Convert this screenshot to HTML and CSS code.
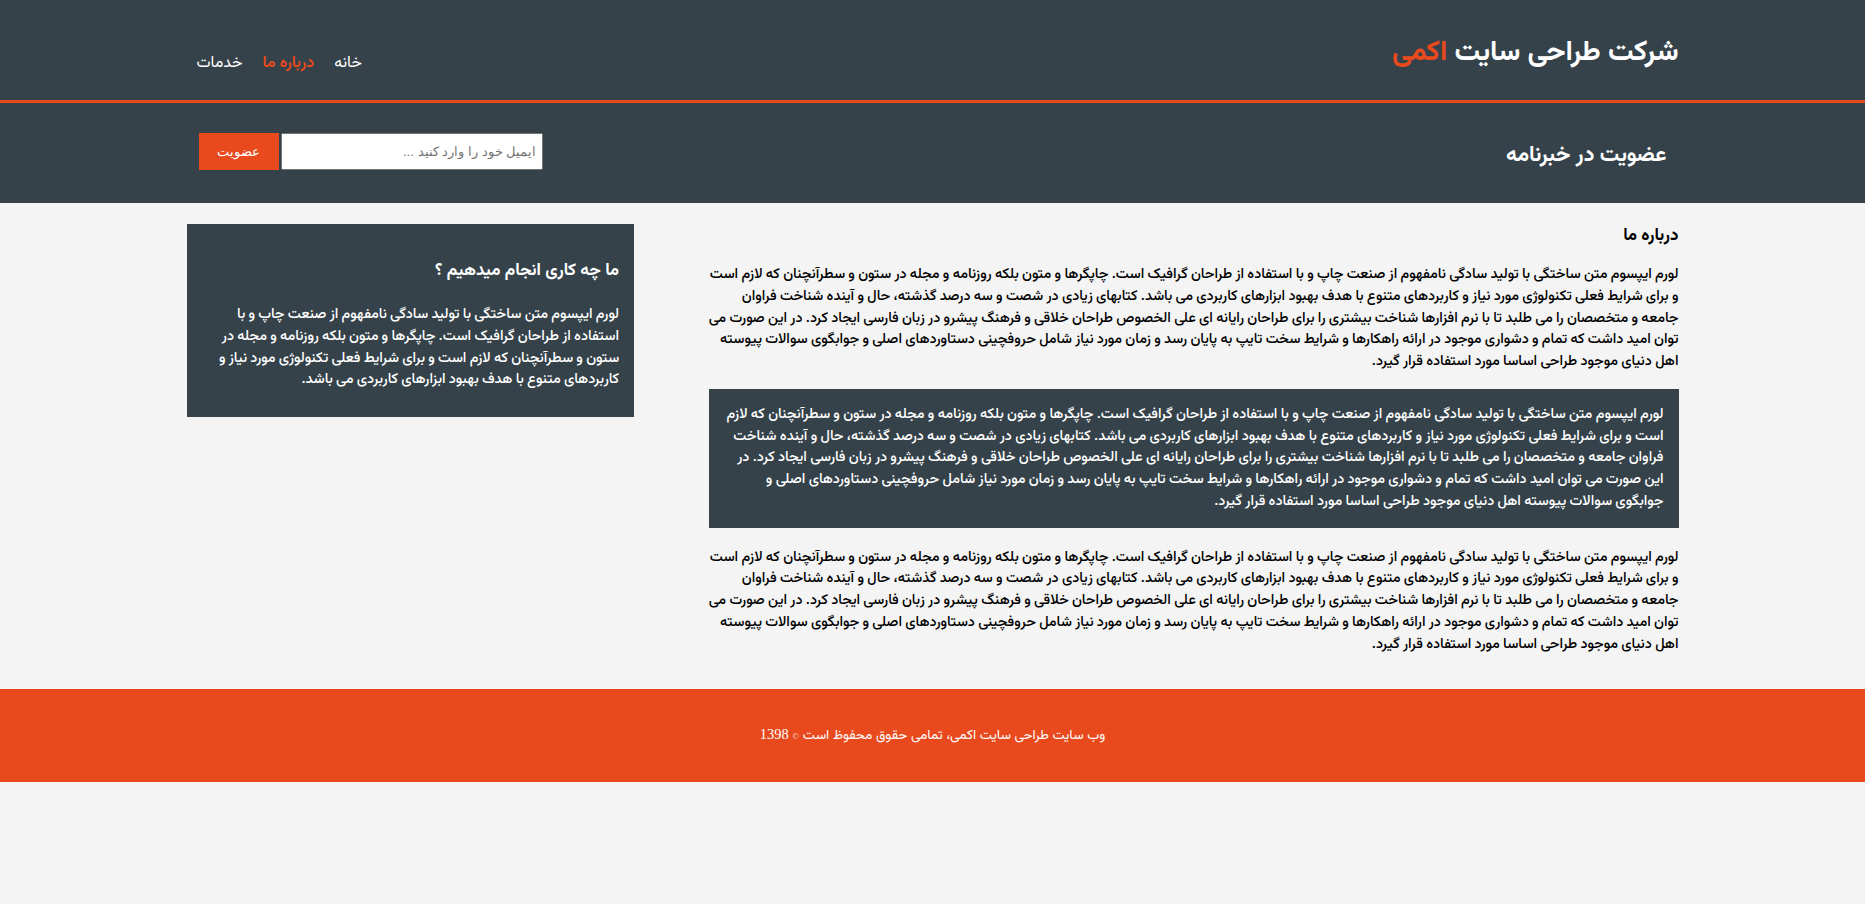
FILE: index.html
```html
<!DOCTYPE html>
<html lang="fa" dir="rtl">
<head>
<meta charset="utf-8">
<title>شرکت طراحی سایت اکمی | درباره ما</title>
<link rel="stylesheet" href="styles.css">
</head>
<body>
<header class="site-header">
  <div class="container header-inner">
    <div class="branding">
      <h1 class="brand">شرکت طراحی سایت <span class="highlight">اکمی</span></h1>
    </div>
    <nav class="main-nav">
      <ul class="nav-list">
        <li class="nav-item"><a class="nav-link" href="#">خانه</a></li>
        <li class="nav-item"><a class="nav-link current" href="#">درباره ما</a></li>
        <li class="nav-item"><a class="nav-link" href="#">خدمات</a></li>
      </ul>
    </nav>
  </div>
</header>

<section class="newsletter">
  <div class="container newsletter-inner">
    <h1 class="newsletter-title">عضویت در خبرنامه</h1>
    <form class="newsletter-form">
      <input class="email-input" type="email" placeholder="ایمیل خود را وارد کنید ...">
      <button class="button-1" type="submit">عضویت</button>
    </form>
  </div>
</section>

<section class="main">
  <div class="container main-inner">
    <article class="main-col">
      <h3 class="page-title">درباره ما</h3>
      <p class="text">لورم ایپسوم متن ساختگی با تولید سادگی نامفهوم از صنعت چاپ و با استفاده از طراحان گرافیک است. چاپگرها و متون بلکه روزنامه و مجله در ستون و سطرآنچنان که لازم است و برای شرایط فعلی تکنولوژی مورد نیاز و کاربردهای متنوع با هدف بهبود ابزارهای کاربردی می باشد. کتابهای زیادی در شصت و سه درصد گذشته، حال و آینده شناخت فراوان جامعه و متخصصان را می طلبد تا با نرم افزارها شناخت بیشتری را برای طراحان رایانه ای علی الخصوص طراحان خلاقی و فرهنگ پیشرو در زبان فارسی ایجاد کرد. در این صورت می توان امید داشت که تمام و دشواری موجود در ارائه راهکارها و شرایط سخت تایپ به پایان رسد و زمان مورد نیاز شامل حروفچینی دستاوردهای اصلی و جوابگوی سوالات پیوسته اهل دنیای موجود طراحی اساسا مورد استفاده قرار گیرد.</p>
      <p class="text dark">لورم ایپسوم متن ساختگی با تولید سادگی نامفهوم از صنعت چاپ و با استفاده از طراحان گرافیک است. چاپگرها و متون بلکه روزنامه و مجله در ستون و سطرآنچنان که لازم است و برای شرایط فعلی تکنولوژی مورد نیاز و کاربردهای متنوع با هدف بهبود ابزارهای کاربردی می باشد. کتابهای زیادی در شصت و سه درصد گذشته، حال و آینده شناخت فراوان جامعه و متخصصان را می طلبد تا با نرم افزارها شناخت بیشتری را برای طراحان رایانه ای علی الخصوص طراحان خلاقی و فرهنگ پیشرو در زبان فارسی ایجاد کرد. در این صورت می توان امید داشت که تمام و دشواری موجود در ارائه راهکارها و شرایط سخت تایپ به پایان رسد و زمان مورد نیاز شامل حروفچینی دستاوردهای اصلی و جوابگوی سوالات پیوسته اهل دنیای موجود طراحی اساسا مورد استفاده قرار گیرد.</p>
      <p class="text">لورم ایپسوم متن ساختگی با تولید سادگی نامفهوم از صنعت چاپ و با استفاده از طراحان گرافیک است. چاپگرها و متون بلکه روزنامه و مجله در ستون و سطرآنچنان که لازم است و برای شرایط فعلی تکنولوژی مورد نیاز و کاربردهای متنوع با هدف بهبود ابزارهای کاربردی می باشد. کتابهای زیادی در شصت و سه درصد گذشته، حال و آینده شناخت فراوان جامعه و متخصصان را می طلبد تا با نرم افزارها شناخت بیشتری را برای طراحان رایانه ای علی الخصوص طراحان خلاقی و فرهنگ پیشرو در زبان فارسی ایجاد کرد. در این صورت می توان امید داشت که تمام و دشواری موجود در ارائه راهکارها و شرایط سخت تایپ به پایان رسد و زمان مورد نیاز شامل حروفچینی دستاوردهای اصلی و جوابگوی سوالات پیوسته اهل دنیای موجود طراحی اساسا مورد استفاده قرار گیرد.</p>
    </article>
    <aside class="sidebar">
      <div class="dark sidebar-box">
        <h3 class="sidebar-title">ما چه کاری انجام میدهیم ؟</h3>
        <p class="sidebar-text">لورم ایپسوم متن ساختگی با تولید سادگی نامفهوم از صنعت چاپ و با استفاده از طراحان گرافیک است. چاپگرها و متون بلکه روزنامه و مجله در ستون و سطرآنچنان که لازم است و برای شرایط فعلی تکنولوژی مورد نیاز و کاربردهای متنوع با هدف بهبود ابزارهای کاربردی می باشد.</p>
      </div>
    </aside>
  </div>
</section>

<footer class="site-footer">
  <p class="footer-text">وب سایت طراحی سایت اکمی، تمامی حقوق محفوظ است <span class="copy">&copy;</span> <span class="year">1398</span></p>
</footer>
</body>
</html>
```

FILE: styles.css
```css
html, body {
  margin: 0;
  padding: 0;
}

body {
  background-color: #f4f4f4;
  color: #000;
  font-family: "Vazirmatn", "Noto Sans Arabic", "DejaVu Sans", sans-serif;
  font-size: 14.4px;
  font-weight: 500;
  line-height: 21.75px;
}

.container {
  width: 80%;
  margin: 0 auto;
}

/* Header */
.site-header {
  background: #35424a;
  color: #fff;
  height: 70px;
  padding-top: 30px;
  border-bottom: 3px solid #e8491d;
}

.header-inner {
  display: flex;
  justify-content: space-between;
  align-items: flex-start;
}

.brand {
  margin: 1px 0 0;
  font-size: 28.3px;
  line-height: 45px;
  font-weight: bold;
}

.highlight {
  color: #e8491d;
}

.main-nav {
  padding-top: 22px;
}

.nav-list {
  list-style: none;
  margin: 0;
  padding: 0;
  display: flex;
}

.nav-item {
  padding: 0 10px;
}

.nav-link {
  color: #fff;
  text-decoration: none;
  font-size: 16px;
  font-weight: 400;
  line-height: 24px;
}

.nav-link.current {
  color: #e8491d;
  font-weight: 600;
}

/* Newsletter */
.newsletter {
  background: #35424a;
  color: #fff;
  padding: 15px;
}

.newsletter-inner {
  display: flex;
  justify-content: space-between;
  align-items: flex-start;
}

.newsletter-title {
  margin: 19.5px 0 14px;
  font-size: 21.5px;
  line-height: 36px;
  font-weight: bold;
}

.newsletter-form {
  display: flex;
  gap: 2px;
  margin-top: 15px;
}

.email-input {
  width: 250px;
  height: 25px;
  padding: 4px;
  margin: 0;
}

.button-1 {
  height: 37px;
  margin: 0;
  background: #e8491d;
  border: 0;
  padding: 0 18.5px;
  color: #fff;
}

/* Main */
.main-inner {
  display: flex;
  justify-content: space-between;
  align-items: flex-start;
}

.main-col {
  width: 65%;
}

.sidebar {
  width: 30%;
  margin-top: 21px;
}

.page-title {
  font-size: 17px;
  line-height: 25.5px;
  margin: 21px 0 15px;
  font-weight: bold;
}

.text {
  margin: 14.5px 0;
  word-spacing: -0.44px;
}

.dark {
  background: #35424a;
  color: #fff;
  padding: 15px;
}

.text.dark {
  margin: 16px 0 19px;
}

.sidebar-box {
  display: flow-root;
}

.sidebar-title {
  font-size: 17px;
  line-height: 25.5px;
  margin: 20px 0 20px;
  font-weight: bold;
}

.sidebar-text {
  margin: 0 0 10.5px;
  word-spacing: -0.5px;
}

/* Footer */
.site-footer {
  margin-top: 19px;
  padding: 20px;
  background-color: #e8491d;
  color: #fff;
  text-align: center;
  font-size: 13.6px;
  font-weight: 400;
  line-height: 22.5px;
}

.footer-text {
  margin: 14.4px 0;
}

.copy {
  font-family: "Liberation Serif", serif;
  font-size: 9px;
  opacity: 0.8;
}

.year {
  font-family: "Liberation Serif", serif;
  font-size: 14.4px;
}
```
